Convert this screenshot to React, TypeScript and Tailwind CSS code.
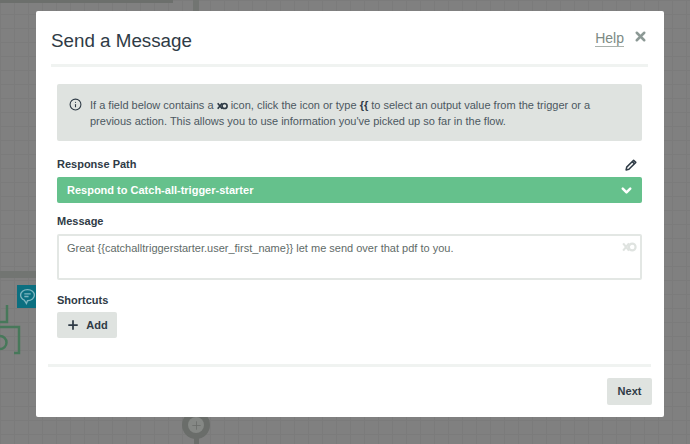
import { ChevronDown, Info, Plus, X } from "lucide-react";

function FlowIcon({ className }: { className?: string }) {
  return (
    <svg viewBox="0 0 16 11" className={className} fill="none" stroke="currentColor" strokeWidth="2.4">
      <path d="M1 1.5 L7.5 9.5 M1 9.5 L7.5 1.5" />
      <circle cx="11" cy="5.5" r="3.7" />
    </svg>
  );
}

function PencilIcon({ className }: { className?: string }) {
  return (
    <svg viewBox="0 0 12 12" className={className} fill="none" stroke="currentColor" strokeWidth="1.5" strokeLinejoin="round">
      <path d="M8.6 1.2 10.8 3.4 3.9 10.3 1.1 10.9 1.7 8.1Z" />
      <path d="M7.2 2.6 9.4 4.8" />
    </svg>
  );
}

export default function App() {
  return (
    <div className="relative h-[444px] w-[690px] overflow-hidden bg-[#808080] bg-[linear-gradient(#7b7b7b_1px,transparent_1px),linear-gradient(90deg,#7b7b7b_1px,transparent_1px)] bg-[size:14px_14px] pl-[36px] pt-[11px] [font-family:'Liberation_Sans',Arial,sans-serif]">
      {/* flow canvas behind the modal */}
      <div className="absolute left-0 top-0 h-[3px] w-[173px] bg-[#6c6f6c]" />
      <div className="absolute left-[193px] top-0 h-[11px] w-[6px] bg-[#727572]" />
      <div className="absolute left-0 top-[271px] h-[7px] w-[36px] bg-[#727572]" />
      <div className="absolute left-[17px] top-[285px] flex h-[23px] w-[19px] items-center justify-center bg-[#0b6f80]">
        <svg viewBox="0 0 16 16" className="ml-[2px] size-[17px] text-[#7fb6c0]" fill="none" stroke="currentColor" strokeWidth="1.3">
          <path d="M8 1.5c3.8 0 6.5 2.3 6.5 5.2S11.8 12 8 12l-1 2.5L5 11.5C3 10.6 1.5 8.9 1.5 6.7 1.5 3.8 4.2 1.5 8 1.5Z" />
          <path d="M5 5.5h6M5 8h4" />
        </svg>
      </div>
      <svg viewBox="0 0 36 60" className="absolute left-0 top-[300px] h-[60px] w-[36px] text-[#47785a]" fill="none" stroke="currentColor" strokeWidth="2.5">
        <path d="M0 22h7V5M0 27h19v26H14" />
        <path d="M0 36a6 6 0 0 1 0 13" />
      </svg>
      <div className="absolute left-[182px] top-[411px] flex size-[28px] items-center justify-center rounded-full bg-[#6a6d6a]">
        <div className="flex size-[16px] items-center justify-center rounded-full bg-[#858885]">
          <Plus className="size-[13px] text-[#6a6d6a]" strokeWidth={1.5} />
        </div>
      </div>
      <div className="absolute left-[194px] top-[438px] h-[6px] w-[5px] bg-[#6a6d6a]" />

      {/* modal */}
      <div className="relative flex h-[406px] w-[628px] flex-col rounded-[2px] bg-white pl-[15px] pr-[16px]">
        <div className="flex h-[56px] shrink-0 items-start justify-between border-b-[3px] border-[#f0f3f1]">
          <h1 className="mt-[18px] text-[18.8px] leading-[24px] text-[#2f3b46]">Send a Message</h1>
          <div className="flex items-start">
            <a className="mt-[19px] border-b-[1.5px] border-[#a9b1ac] text-[14px] leading-[16px] text-[#7c8a84]">Help</a>
            <X className="ml-[9px] mt-[18px] size-[15px] text-[#8c9995]" strokeWidth={4} />
          </div>
        </div>

        <div className="flex flex-1 flex-col px-[6px]">
          <div className="mt-[17px] flex h-[57px] rounded-[2px] bg-[#dfe3e0] pl-[12px] pt-[13px] text-[11px] leading-[16px] text-[#4c5860]">
            <Info className="mr-[8px] mt-[1px] size-[13px] shrink-0 text-[#2f3b46]" strokeWidth={2} />
            <p className="w-[510px]">
              If a field below contains a{" "}
              <FlowIcon className="inline h-[8px] w-[11px] align-[-0.5px] text-[#2f3b46]" /> icon, click the icon or
              type <b className="text-[#2f3b46]">{"{{"}</b> to select an output value from the trigger or a previous
              action. This allows you to use information you've picked up so far in the flow.
            </p>
          </div>

          <div className="mt-[16px] flex items-center justify-between">
            <label className="text-[11px] font-bold leading-[15px] text-[#2f3b46]">Response Path</label>
            <PencilIcon className="mr-[5px] size-[12px] text-[#2f3b46]" />
          </div>
          <div className="mt-[5px] flex h-[26px] items-center justify-between rounded-[2px] bg-[#65c18c] pl-[10px] pr-[8px] text-[11px] font-bold text-white">
            <span>Respond to Catch-all-trigger-starter</span>
            <ChevronDown className="size-[15px]" strokeWidth={4} />
          </div>

          <label className="mt-[11px] text-[11px] font-bold leading-[15px] text-[#2f3b46]">Message</label>
          <div className="mt-[5px] flex h-[46px] items-start justify-between rounded-[2px] border-2 border-[#e3e7e4] pl-[8px] pr-[3px] pt-[4px] text-[11px] leading-[16px] text-[#5f6b68]">
            <span>Great {"{{catchalltriggerstarter.user_first_name}}"} let me send over that pdf to you.</span>
            <FlowIcon className="mt-[2px] h-[10px] w-[15px] text-[#dfe3e0]" />
          </div>

          <label className="mt-[13px] text-[11px] font-bold leading-[15px] text-[#2f3b46]">Shortcuts</label>
          <button className="mt-[4px] flex h-[26px] w-[60px] items-center justify-center gap-[6px] rounded-[2px] bg-[#dfe3e0] text-[11px] font-bold text-[#2f3b46]">
            <Plus className="size-[14px]" strokeWidth={3} />
            Add
          </button>
        </div>

        <div className="-mx-[3px] flex h-[53px] shrink-0 items-start justify-end border-t-[3px] border-[#f0f3f1] pt-[11px]">
          <button className="-mr-[1px] h-[27px] w-[45px] rounded-[2px] bg-[#dfe3e0] text-[11px] font-bold text-[#2f3b46]">
            Next
          </button>
        </div>
      </div>
    </div>
  );
}
